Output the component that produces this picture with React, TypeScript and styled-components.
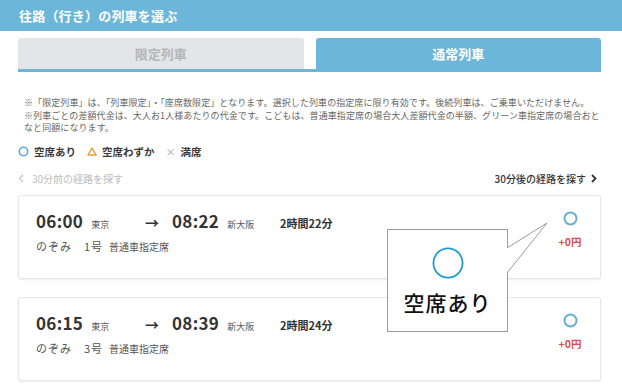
import React from "react";
import styled, { createGlobalStyle } from "styled-components";

const GlobalStyle = createGlobalStyle`
  html, body {
    margin: 0;
    padding: 0;
    background: #ffffff;
  }
  body {
    font-family: "Noto Sans CJK JP", "Noto Sans", sans-serif;
    color: #333333;
  }
`;

const Page = styled.div`
  position: relative;
  width: 622px;
  height: 388px;
  overflow: hidden;
  background: #ffffff;
`;

const Header = styled.div`
  height: 31px;
  background: #6cb7d9;
  display: flex;
  align-items: center;
  padding-left: 19px;
  color: #ffffff;
  font-size: 13px;
  font-weight: 700;
  letter-spacing: 0.2px;
`;

const Body = styled.div`
  padding: 0 21px 0 18px;
`;

const Tabs = styled.div`
  display: flex;
  gap: 12px;
  margin-top: 7px;
  border-bottom: 3px solid #6cb7d9;
`;

const Tab = styled.div<{ $active?: boolean }>`
  flex: 1;
  height: 31px;
  display: flex;
  align-items: center;
  justify-content: center;
  border-radius: 3px 3px 0 0;
  font-size: 13px;
  font-weight: 700;
  background: ${(p) => (p.$active ? "#6cb7d9" : "#e4e5e7")};
  color: ${(p) => (p.$active ? "#ffffff" : "#b4b6b9")};
`;

const Notes = styled.p`
  margin: 25px 0 0 0;
  padding-left: 6px;
  font-size: 9px;
  line-height: 12.5px;
  letter-spacing: 0.08px;
  color: #666666;
  white-space: nowrap;
`;

const Legend = styled.div`
  display: flex;
  align-items: center;
  gap: 11px;
  margin-top: 9px;
  height: 16px;
  font-size: 10.5px;
  font-weight: 700;
  color: #3a3a3a;
`;

const LegendItem = styled.span`
  display: flex;
  align-items: center;
  gap: 5px;
`;

const Cross = styled.span`
  color: #a0a0a0;
  font-weight: 400;
  font-size: 10px;
`;

const Nav = styled.div`
  display: flex;
  justify-content: space-between;
  align-items: center;
  margin-top: 12px;
  height: 14px;
  font-size: 10px;
`;

const NavLink = styled.span<{ $disabled?: boolean }>`
  display: flex;
  align-items: center;
  gap: ${(p) => (p.$disabled ? "8px" : "5px")};
  color: ${(p) => (p.$disabled ? "#bcbcbc" : "#333333")};
  font-weight: ${(p) => (p.$disabled ? 400 : 500)};
  padding-right: 4px;
`;

const CardList = styled.div`
  display: flex;
  flex-direction: column;
  gap: 18px;
  margin-top: 9px;
`;

const Card = styled.div`
  height: 84px;
  box-sizing: border-box;
  border: 1px solid #e6e6e6;
  border-radius: 3px;
  box-shadow: 0 1px 2px rgba(0, 0, 0, 0.08);
  background: #ffffff;
  display: flex;
  justify-content: space-between;
  padding: 12px 16px 0 17px;
`;

const CardMain = styled.div`
  display: flex;
  flex-direction: column;
  gap: 2px;
`;

const TimeRow = styled.div`
  display: grid;
  grid-template-columns: 109px 27px 108px auto;
  align-items: baseline;
  height: 28px;
`;

const Stop = styled.span`
  display: flex;
  align-items: baseline;
  gap: 8px;
`;

const Time = styled.span`
  font-size: 17px;
  font-weight: 700;
  color: #333333;
  letter-spacing: 0.3px;
`;

const Station = styled.span`
  font-size: 9px;
  color: #555555;
`;

const Arrow = styled.span`
  font-size: 14px;
  font-weight: 700;
  color: #333333;
`;

const Duration = styled.span`
  font-size: 11px;
  font-weight: 700;
  color: #333333;
`;

const TrainRow = styled.div`
  display: flex;
  align-items: baseline;
  gap: 6px;
  color: #555555;
`;

const TrainName = styled.span`
  font-size: 11px;
  letter-spacing: 1px;
`;

const SeatClass = styled.span`
  font-size: 10px;
`;

const CardSide = styled.div`
  display: flex;
  flex-direction: column;
  align-items: center;
  gap: 8px;
  padding-top: 3px;
  width: 28px;
`;

const Price = styled.span`
  font-size: 10.5px;
  font-weight: 700;
  color: #dd4b4b;
`;

const Callout = styled.div`
  position: absolute;
  left: 387px;
  top: 229px;
  width: 121px;
  height: 103px;
  box-sizing: border-box;
  border: 1px solid #9a9a9a;
  background: #ffffff;
  display: flex;
  flex-direction: column;
  align-items: center;
  padding-top: 17px;
  gap: 8px;
`;

const CalloutText = styled.span`
  font-size: 21px;
  font-weight: 500;
  color: #111111;
  letter-spacing: 1px;
`;

const Tail = styled.svg`
  position: absolute;
  left: 119px;
  top: -9px;
  overflow: visible;
`;

const Circle = ({ size, stroke, color }: { size: number; stroke: number; color: string }) => (
  <svg width={size} height={size} viewBox={`0 0 ${size} ${size}`}>
    <circle cx={size / 2} cy={size / 2} r={size / 2 - stroke / 2 - 0.5} fill="none" stroke={color} strokeWidth={stroke} />
  </svg>
);

const Triangle = () => (
  <svg width="10" height="9" viewBox="0 0 10 9">
    <path d="M5 1 L9 8 L1 8 Z" fill="none" stroke="#f0a030" strokeWidth="1.5" strokeLinejoin="round" />
  </svg>
);

const Chevron = ({ dir, color, width }: { dir: "left" | "right"; color: string; width: number }) => (
  <svg width="6" height="9" viewBox="0 0 6 9">
    <path
      d={dir === "left" ? "M5 1 L1.5 4.5 L5 8" : "M1 1 L4.5 4.5 L1 8"}
      fill="none"
      stroke={color}
      strokeWidth={width}
    />
  </svg>
);

const trains = [
  { dep: "06:00", arr: "08:22", dur: "2時間22分", no: "1号" },
  { dep: "06:15", arr: "08:39", dur: "2時間24分", no: "3号" },
];

const App: React.FC = () => {
  return (
    <Page>
      <GlobalStyle />
      <Header>往路（行き）の列車を選ぶ</Header>
      <Body>
        <Tabs>
          <Tab>限定列車</Tab>
          <Tab $active>通常列車</Tab>
        </Tabs>
        <Notes>
          ※「限定列車」は、「列車限定」・「座席数限定」となります。選択した列車の指定席に限り有効です。後続列車は、ご乗車いただけません。
          <br />
          ※列車ごとの差額代金は、大人お1人様あたりの代金です。こどもは、普通車指定席の場合大人差額代金の半額、グリーン車指定席の場合おと
          <br />
          なと同額になります。
        </Notes>
        <Legend>
          <LegendItem>
            <Circle size={11} stroke={1.6} color="#5aa9d2" />
            空席あり
          </LegendItem>
          <LegendItem>
            <Triangle />
            空席わずか
          </LegendItem>
          <LegendItem>
            <Cross>×</Cross>
            満席
          </LegendItem>
        </Legend>
        <Nav>
          <NavLink $disabled>
            <Chevron dir="left" color="#c4c4c4" width={1.2} />
            30分前の経路を探す
          </NavLink>
          <NavLink>
            30分後の経路を探す
            <Chevron dir="right" color="#333333" width={1.8} />
          </NavLink>
        </Nav>
        <CardList>
          {trains.map((t) => (
            <Card key={t.dep}>
              <CardMain>
                <TimeRow>
                  <Stop>
                    <Time>{t.dep}</Time>
                    <Station>東京</Station>
                  </Stop>
                  <Arrow>→</Arrow>
                  <Stop>
                    <Time>{t.arr}</Time>
                    <Station>新大阪</Station>
                  </Stop>
                  <Duration>{t.dur}</Duration>
                </TimeRow>
                <TrainRow>
                  <TrainName>のぞみ　{t.no}</TrainName>
                  <SeatClass>普通車指定席</SeatClass>
                </TrainRow>
              </CardMain>
              <CardSide>
                <Circle size={15} stroke={2} color="#6aaed3" />
                <Price>+0円</Price>
              </CardSide>
            </Card>
          ))}
        </CardList>
      </Body>
      <Callout>
        <Tail width="42" height="60">
          <path d="M0 27 L40 2 L0 52" fill="#ffffff" stroke="#9a9a9a" strokeWidth="1" />
        </Tail>
        <Circle size={32} stroke={1.8} color="#1d9bd6" />
        <CalloutText>空席あり</CalloutText>
      </Callout>
    </Page>
  );
};

export default App;
